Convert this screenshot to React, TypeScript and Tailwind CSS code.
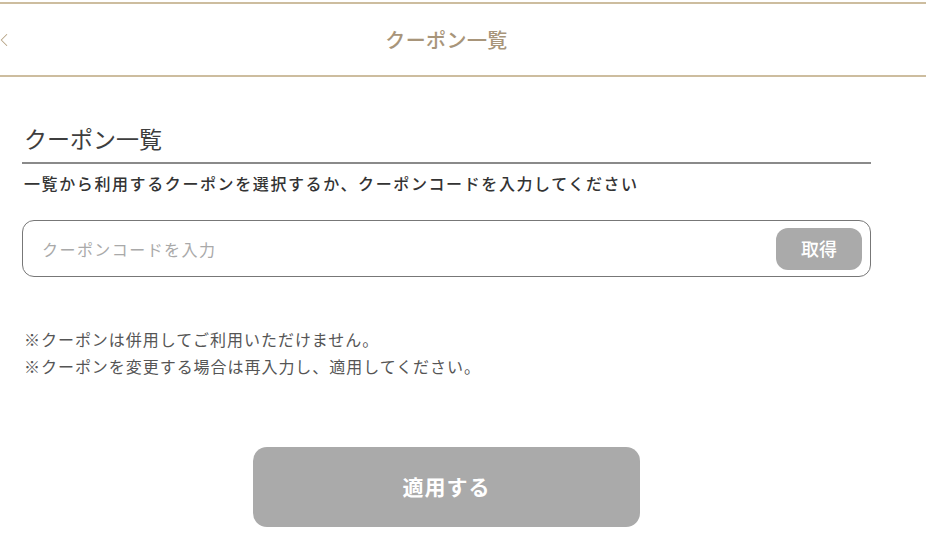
import { ChevronLeft } from "lucide-react";

const FONT = "font-['Noto_Sans_CJK_JP','Noto_Sans',sans-serif]";

export default function App() {
  return (
    <div className={`min-h-[540px] w-[926px] bg-white ${FONT} text-[#444]`}>
      {/* Top bar */}
      <header className="pt-[2px]">
        <div className="border-y-2 border-[#cdbd9f]">
          <div className="relative flex h-[71px] w-[893px] items-center justify-center">
            <ChevronLeft
              className="absolute left-[-7px] top-[25px] text-[#b5a283]"
              size={22}
              strokeWidth={1.1}
            />
            <h1 className="text-[20px] font-medium tracking-[0.02em] text-[#a8957a]">クーポン一覧</h1>
          </div>
        </div>
      </header>

      <main className="w-[893px] px-[22px]">
        {/* Section title */}
        <section className="pt-[45px]">
          <h2 className="border-b-2 border-[#8a8a8a] pb-[8px] pl-[2px] text-[23px] leading-[32px] text-[#3e3e3e]">
            クーポン一覧
          </h2>
          <p className="mt-[8px] pl-[2px] text-[16px] font-medium leading-[22px] tracking-[0.1em] text-[#333]">
            一覧から利用するクーポンを選択するか、クーポンコードを入力してください
          </p>
        </section>

        {/* Coupon code input */}
        <div className="mt-[26px] flex h-[57px] items-center rounded-[12px] border-[1.5px] border-[#777] pl-[19px] pr-[8px]">
          <input
            className="flex-1 bg-transparent text-[16px] tracking-[0.09em] text-[#444] outline-none placeholder:text-[#a9a9a9]"
            placeholder="クーポンコードを入力"
          />
          <button className="h-[42px] w-[86px] rounded-[12px] bg-[#aaaaaa] text-[18px] font-medium text-white">
            取得
          </button>
        </div>

        {/* Notes */}
        <div className="mt-[49px] pl-[2px] text-[16px] leading-[27px] tracking-[0.06em] text-[#555]">
          <p>※クーポンは併用してご利用いただけません。</p>
          <p>※クーポンを変更する場合は再入力し、適用してください。</p>
        </div>

        {/* Apply */}
        <div className="mt-[67px] flex justify-center">
          <button className="h-[80px] w-[387px] rounded-[14px] bg-[#aaaaaa] text-[21px] font-bold tracking-[0.05em] text-white">
            適用する
          </button>
        </div>
      </main>
    </div>
  );
}
